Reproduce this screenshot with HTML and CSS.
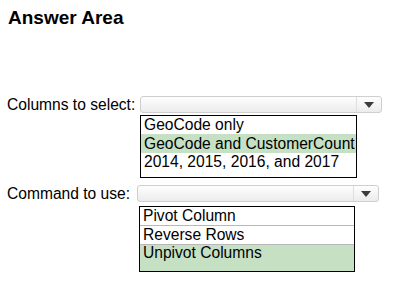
FILE: index.html
```html
<!DOCTYPE html>
<html>
<head>
<meta charset="utf-8">
<link rel="stylesheet" href="styles.css">
</head>
<body>
<h1 class="title">Answer Area</h1>
<div class="question q1">
  <span class="label">Columns to select:</span>
  <div class="dropdown">
    <div class="select">
      <span class="select-field"></span>
      <span class="select-btn"><svg width="10" height="6" viewBox="0 0 10 6"><path d="M0 0H10L5 6Z" fill="#3c3c3c"/></svg></span>
    </div>
    <ul class="options opts1">
      <li class="opt">GeoCode only</li>
      <li class="opt sel">GeoCode and CustomerCount</li>
      <li class="opt">2014, 2015, 2016, and 2017</li>
    </ul>
  </div>
</div>
<div class="question q2">
  <span class="label">Command to use:</span>
  <div class="dropdown">
    <div class="select">
      <span class="select-field"></span>
      <span class="select-btn"><svg width="10" height="6" viewBox="0 0 10 6"><path d="M0 0H10L5 6Z" fill="#3c3c3c"/></svg></span>
    </div>
    <ul class="options opts2">
      <li class="opt line">Pivot Column</li>
      <li class="opt line">Reverse Rows</li>
      <li class="opt sel tall">Unpivot Columns</li>
    </ul>
  </div>
</div>
</body>
</html>
```
FILE: styles.css
```css
html, body {
  margin: 0;
  padding: 0;
  background: #fff;
}
body {
  font-family: "Liberation Sans", Arial, sans-serif;
  color: #000;
  width: 400px;
  height: 301px;
  overflow: hidden;
}
.title {
  margin: 0;
  padding: 7px 0 0 8px;
  font-size: 19px;
  line-height: 22px;
  font-weight: bold;
}
.question {
  display: flex;
  align-items: flex-start;
  font-size: 15.6px;
}
.q1 {
  margin-top: 67px;
}
.q2 {
  margin-top: 7px;
}
.label {
  padding-left: 7px;
  line-height: 17px;
  padding-top: 0;
  white-space: nowrap;
}
.q1 .label {
  width: 133px;
}
.q2 .label {
  width: 130px;
}
.dropdown {
  display: flex;
  flex-direction: column;
}
.select {
  display: flex;
  width: 240px;
  height: 15px;
  border: 1px solid #cfcfcf;
  border-radius: 3px;
  background: linear-gradient(#fefefe, #ececec);
}
.select-field {
  flex: 1;
}
.select-btn {
  width: 24px;
  border-left: 1px solid #dedede;
  display: flex;
  align-items: center;
  justify-content: center;
}
.options {
  list-style: none;
  margin: 2px 0 0 0;
  padding: 0;
  border: 1px solid #000;
  width: 215px;
}
.q2 .options {
  margin-top: 4px;
  margin-left: 2px;
  width: 214px;
}
.opts1 {
  padding-bottom: 6px;
}
.opt {
  padding-left: 3px;
  line-height: 18px;
  height: 18px;
  white-space: nowrap;
}
.opt.sel {
  background: #c6e0c4;
  height: 19px;
  line-height: 19px;
}
.opt.line {
  border-bottom: 1px solid #b8b8b8;
}
.opt.tall {
  height: 26px;
  line-height: 16px;
}
```
